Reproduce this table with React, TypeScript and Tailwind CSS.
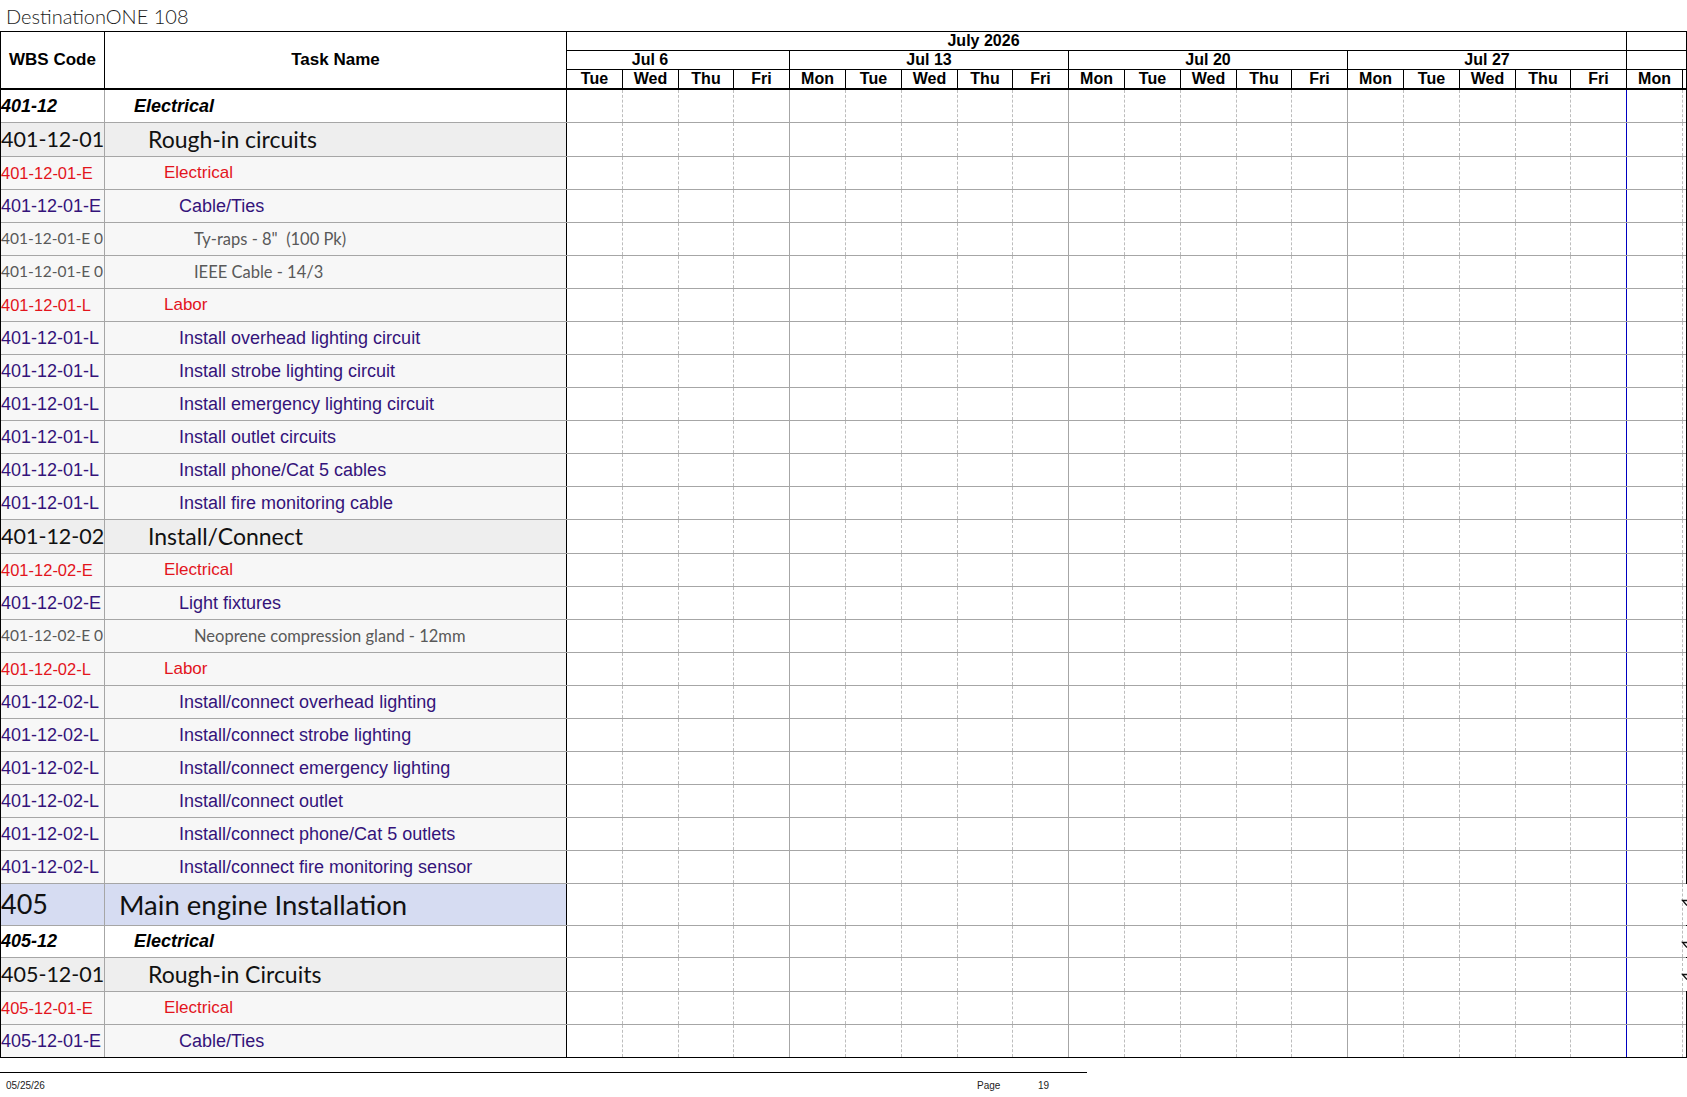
import clsx from "clsx";

type Kind = "section" | "sub" | "red" | "purple" | "gray" | "major";

type Row = { kind: Kind; code: string; task: string; marker?: boolean };

const ROWS: Row[] = [
  { kind: "section", code: "401-12", task: "Electrical" },
  { kind: "sub", code: "401-12-01", task: "Rough-in circuits" },
  { kind: "red", code: "401-12-01-E", task: "Electrical" },
  { kind: "purple", code: "401-12-01-E", task: "Cable/Ties" },
  { kind: "gray", code: "401-12-01-E 0", task: 'Ty-raps - 8"  (100 Pk)' },
  { kind: "gray", code: "401-12-01-E 0", task: "IEEE Cable - 14/3" },
  { kind: "red", code: "401-12-01-L", task: "Labor" },
  { kind: "purple", code: "401-12-01-L", task: "Install overhead lighting circuit" },
  { kind: "purple", code: "401-12-01-L", task: "Install strobe lighting circuit" },
  { kind: "purple", code: "401-12-01-L", task: "Install emergency lighting circuit" },
  { kind: "purple", code: "401-12-01-L", task: "Install outlet circuits" },
  { kind: "purple", code: "401-12-01-L", task: "Install phone/Cat 5 cables" },
  { kind: "purple", code: "401-12-01-L", task: "Install fire monitoring cable" },
  { kind: "sub", code: "401-12-02", task: "Install/Connect" },
  { kind: "red", code: "401-12-02-E", task: "Electrical" },
  { kind: "purple", code: "401-12-02-E", task: "Light fixtures" },
  { kind: "gray", code: "401-12-02-E 0", task: "Neoprene compression gland - 12mm" },
  { kind: "red", code: "401-12-02-L", task: "Labor" },
  { kind: "purple", code: "401-12-02-L", task: "Install/connect overhead lighting" },
  { kind: "purple", code: "401-12-02-L", task: "Install/connect strobe lighting" },
  { kind: "purple", code: "401-12-02-L", task: "Install/connect emergency lighting" },
  { kind: "purple", code: "401-12-02-L", task: "Install/connect outlet" },
  { kind: "purple", code: "401-12-02-L", task: "Install/connect phone/Cat 5 outlets" },
  { kind: "purple", code: "401-12-02-L", task: "Install/connect fire monitoring sensor" },
  { kind: "major", code: "405", task: "Main engine Installation", marker: true },
  { kind: "section", code: "405-12", task: "Electrical", marker: true },
  { kind: "sub", code: "405-12-01", task: "Rough-in Circuits", marker: true },
  { kind: "red", code: "405-12-01-E", task: "Electrical" },
  { kind: "purple", code: "405-12-01-E", task: "Cable/Ties" },
];

// h includes the 1px top rule
const KIND: Record<Kind, { h: string; bg: string; code: string; text: string; pad: string }> = {
  section: {
    h: "h-[32px]",
    bg: "bg-white",
    code: "font-['Liberation_Sans',Arial,sans-serif] text-[18px] font-bold italic text-black",
    text: "font-['Liberation_Sans',Arial,sans-serif] text-[18px] font-bold italic text-black",
    pad: "pl-[29px]",
  },
  sub: {
    h: "h-[34px]",
    bg: "bg-[#eeeeee]",
    code: "font-['Lato',sans-serif] text-[21.5px] text-[#111]",
    text: "font-['Lato',sans-serif] text-[23px] text-[#111]",
    pad: "pl-[43px]",
  },
  red: {
    h: "h-[33px]",
    bg: "bg-[#f7f7f7]",
    code: "font-['Liberation_Sans',Arial,sans-serif] text-[16.5px] text-[#e3141c]",
    text: "font-['Liberation_Sans',Arial,sans-serif] text-[17px] text-[#e3141c]",
    pad: "pl-[59px]",
  },
  purple: {
    h: "h-[33px]",
    bg: "bg-[#f7f7f7]",
    code: "font-['Liberation_Sans',Arial,sans-serif] text-[18px] text-[#34137a]",
    text: "font-['Liberation_Sans',Arial,sans-serif] text-[18px] text-[#34137a]",
    pad: "pl-[74px]",
  },
  gray: {
    h: "h-[33px]",
    bg: "bg-[#f7f7f7]",
    code: "font-['Lato',sans-serif] text-[15.5px] text-[#595959]",
    text: "font-['Lato',sans-serif] text-[16.5px] text-[#595959]",
    pad: "pl-[89px]",
  },
  major: {
    h: "h-[42px]",
    bg: "bg-[#d6dcf2]",
    code: "font-['Lato',sans-serif] text-[27px] text-[#111]",
    text: "font-['Lato',sans-serif] text-[27.5px] text-[#111]",
    pad: "pl-[14px]",
  },
};

const DAYS = [
  "Tue", "Wed", "Thu", "Fri",
  "Mon", "Tue", "Wed", "Thu", "Fri",
  "Mon", "Tue", "Wed", "Thu", "Fri",
  "Mon", "Tue", "Wed", "Thu", "Fri",
  "Mon",
];

// whole-pixel day columns (55.8px average) so the rules stay crisp
const DAY_COLS =
  "grid-cols-[56px_56px_55px_56px_56px_56px_56px_55px_56px_56px_56px_56px_55px_56px_56px_56px_56px_55px_56px_56px_1fr]";

// right edge of each day column in the chart body
function dayRule(k: number) {
  if (k === 18) return "border-r border-solid border-[#0000c0]";
  if (k === 3 || k === 8 || k === 13) return "border-r border-solid border-[#a6a6a6]";
  return "border-r border-dashed border-[#bdbdbd]";
}

function Marker() {
  return (
    <svg width="6" height="10" viewBox="0 0 6 10" className="-ml-[2px] block overflow-visible">
      <path d="M6 1.5H1.5L6 6.5" fill="none" stroke="#111" strokeWidth="1.3" />
    </svg>
  );
}

function BodyRow({ r, first }: { r: Row; first: boolean }) {
  const s = KIND[r.kind];
  return (
    <div className={clsx("flex", s.h, !first && "border-t border-[#a6a6a6]")}>
      <div className={clsx("flex w-[566px] shrink-0 border-r border-black", s.bg)}>
        <div className="flex w-[104px] shrink-0 items-center overflow-hidden whitespace-nowrap border-r border-[#a6a6a6]">
          <span className={s.code}>{r.code}</span>
        </div>
        <div className={clsx("flex min-w-0 flex-1 items-center overflow-hidden whitespace-pre", s.pad)}>
          <span className={s.text}>{r.task}</span>
        </div>
      </div>
      <div className={clsx("grid flex-1 bg-white", DAY_COLS)}>
        {DAYS.map((_, k) => (
          <div key={k} className={dayRule(k)} />
        ))}
        <div className="flex items-start pt-[15px]">{r.marker && <Marker />}</div>
      </div>
    </div>
  );
}

export default function App() {
  const head = "font-['Liberation_Sans',Arial,sans-serif] text-[16px] font-bold text-black";
  const colHead = "font-['Liberation_Sans',Arial,sans-serif] text-[17px] font-bold text-black";
  return (
    <div className="h-[1097px] w-[1687px] overflow-hidden bg-white">
      <div className="flex h-[31px] items-center pl-[6px]">
        <span className="font-['Lato',sans-serif] text-[20px] font-light text-[#1a1a1a]">
          DestinationONE 108
        </span>
      </div>

      <div className="border border-black">
        {/* header */}
        <div className="flex">
          <div className="flex w-[566px] shrink-0 border-b-2 border-r border-black">
            <div className={clsx("flex w-[104px] shrink-0 items-center justify-center border-r border-black", colHead)}>
              WBS Code
            </div>
            <div className={clsx("flex flex-1 items-center justify-center", colHead)}>Task Name</div>
          </div>
          <div className="flex flex-1 flex-col leading-[18px]">
            <div className="grid h-[19px] grid-cols-[1060px_1fr] border-b border-black">
              <div className={clsx("border-r border-black pr-[226px] text-center", head)}>July 2026</div>
              <div />
            </div>
            <div className="grid h-[19px] grid-cols-[223px_279px_279px_279px_1fr] border-b border-black">
              <div className={clsx("border-r border-black pr-[56px] text-center", head)}>Jul 6</div>
              <div className={clsx("border-r border-black text-center", head)}>Jul 13</div>
              <div className={clsx("border-r border-black text-center", head)}>Jul 20</div>
              <div className={clsx("border-r border-black text-center", head)}>Jul 27</div>
              <div />
            </div>
            <div className={clsx("grid h-[20px] border-b-2 border-black", DAY_COLS)}>
              {DAYS.map((d, k) => (
                <div key={k} className={clsx("border-r border-black text-center", head)}>
                  {d}
                </div>
              ))}
              <div />
            </div>
          </div>
        </div>

        {/* body */}
        {ROWS.map((r, i) => (
          <BodyRow key={i} r={r} first={i === 0} />
        ))}
      </div>

      <div className="mt-[14px] h-px w-[1087px] bg-black" />
      <div className="flex h-[24px] w-[1087px] items-center font-['Liberation_Sans',Arial,sans-serif] text-[10px] text-[#222]">
        <span className="w-[977px] pl-[6px]">05/25/26</span>
        <span className="w-[61px]">Page</span>
        <span>19</span>
      </div>
    </div>
  );
}
